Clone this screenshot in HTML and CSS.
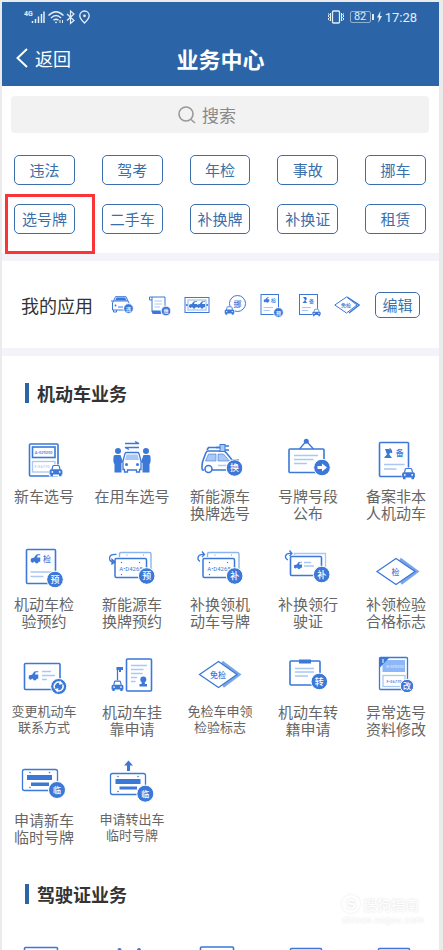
FILE: index.html
```html
<!DOCTYPE html>
<html lang="zh-CN">
<head>
<meta charset="utf-8">
<meta name="viewport" content="width=device-width, initial-scale=1">
<title>业务中心</title>
<link rel="stylesheet" href="styles.css">
</head>
<body>
<svg class="sprite" aria-hidden="true">
  <symbol id="car" viewBox="0 0 14 12">
    <path d="M1 11V5.500L3 4.500 4 1H10L11 4.500 13 5.500V11Z" fill="#fff" stroke="#fff" stroke-width="2"/>
    <path d="M3 5 3.800 1.700Q4 1 5 1H9Q10 1 10.200 1.700L11 5" fill="#fff" stroke="#3b78d8" stroke-width="1.200"/>
    <path d="M2.200 4.800H11.800Q13.400 5 13.400 6.500V10H12.500V11.700H10V10H4V11.700H1.500V10H.6V6.500Q.6 5 2.200 4.800Z" fill="#3b78d8"/>
    <circle cx="3.300" cy="7.400" r=".9" fill="#fff"/><circle cx="10.700" cy="7.400" r=".9" fill="#fff"/>
  </symbol>
  <symbol id="sidecar" viewBox="0 0 10 10">
    <path d="M0 5.500Q0 4 2 4L3.500 3.800 5.500 1Q6 .3 7 .3H10V1.300H7.300L6.300 3.600H10V7.800H8.300Q7.800 9.600 6.300 9.600T4.300 7.800H3.300Q3 8.800 2 8.800T.8 7.800H0Z" fill="#3b78d8"/>
  </symbol>
  <symbol id="plates" viewBox="0 0 80 54">
    <path d="M27.500 15V12Q27.500 10.500 29 10.500H57.500Q59 10.500 59 12V29" fill="none" stroke="#8db4ee" stroke-width="1.400"/>
    <rect x="23" y="16.500" width="31.500" height="19" rx="1.500" fill="#fff" stroke="#3b78d8" stroke-width="1.500"/>
    <g fill="#3b78d8"><circle cx="29.500" cy="20.500" r=".7"/><circle cx="47.500" cy="20.500" r=".7"/><circle cx="29.500" cy="32.500" r=".7"/><circle cx="35" cy="13" r=".5"/><circle cx="51.500" cy="13" r=".5"/></g>
  </symbol>
</svg>

<div class="phone">
  <header class="top">
    <div class="status">
      <svg width="68" height="18" viewBox="0 0 68 18" fill="none" stroke="#e5edf6" aria-hidden="true">
        <text x="0" y="8" class="net">4G</text>
        <path d="M8.500 13V15M11.500 11V15M14.500 8.500V15M17.500 6V15M20 3.500V15" stroke-width="1.500"/>
        <path d="M24.500 7.500Q32 0 39.500 7.500M27 10Q32 5 37 10M29.500 12.300Q32 10 34.500 12.300" stroke-width="1.400"/>
        <circle cx="32" cy="14.300" r=".9" fill="#e5edf6" stroke="none"/><path d="M36 12V15M38.500 12V15"/>
        <path d="M43 6 50 12.500 46.500 15.500V3L50 6 43 12.500" stroke-width="1.200"/>
        <path d="M60.500 15Q55.800 10.500 55.800 7.700A4.700 4.700 0 0 1 65.200 7.700Q65.200 10.500 60.500 15Z" stroke-width="1.300"/><circle cx="60.500" cy="7.800" r="1.400" fill="#e5edf6" stroke="none"/>
      </svg>
      <div class="status-right">
        <svg width="18" height="14" viewBox="0 0 18 14" fill="none" stroke="#e5edf6" aria-hidden="true"><rect x="5.500" y="1" width="7" height="12" rx="1" stroke-width="1.300"/><path d="M1 3.500 2.500 4.500 1 6 2.500 7.500 1 9 2.500 10.500M3.500 3V11M17 3.500 15.500 4.500 17 6 15.500 7.500 17 9 15.500 10.500M14.500 3V11"/></svg>
        <span class="battery">82</span>
        <svg width="5" height="12" viewBox="0 0 5 12" fill="#e5edf6" aria-hidden="true"><path d="M3.500 0 0 6.500H2L1.200 12 5 5H3Z"/></svg>
        <time>17:28</time>
      </div>
    </div>
    <div class="nav">
      <button class="back" type="button">
        <svg width="12" height="20" viewBox="0 0 12 20" fill="none" stroke="#fff" stroke-width="2" aria-hidden="true"><path d="M11 1 1.500 10 11 19"/></svg>
        返回
      </button>
      <h1>业务中心</h1>
    </div>
  </header>

  <main>
    <label class="search">
      <svg width="18" height="18" viewBox="0 0 18 18" fill="none" stroke="#999" stroke-width="1.600" aria-hidden="true"><circle cx="8" cy="8" r="7"/><path d="M13 13.500 17 17"/></svg>
      <input type="search" placeholder="搜索" aria-label="搜索">
    </label>

    <nav class="chips">
      <button type="button">违法</button><button type="button">驾考</button><button type="button">年检</button><button type="button">事故</button><button type="button">挪车</button>
      <button type="button" class="marked">选号牌</button><button type="button">二手车</button><button type="button">补换牌</button><button type="button">补换证</button><button type="button">租赁</button>
    </nav>

    <section class="mine">
      <h2>我的应用</h2>
      <div class="mine-icons">
        <svg viewBox="0 0 26 26"><path d="M4.500 9 6.500 4.700H17L19 9" class="s"/><path d="M6 8.500 7.500 5.500H16L17.800 8.500Z" class="f"/><path d="M4.500 9H19L20 11V18H3.500V11ZM4.500 18V20H7.500V18M2 9H4" class="s"/><circle cx="6.500" cy="13.500" r="1" class="f"/><path d="M9 15H14" class="s"/><circle cx="19.500" cy="16.500" r="4.900" class="b"/><text x="19.500" y="18.600" class="t xs w">违</text></svg>
        <svg viewBox="0 0 26 26"><path d="M5 8H2.500V5H18V20" class="s"/><path d="M5 5V20H16" class="s"/><path d="M5 18.500H14V22H6Q5 22 5 20Z" class="f"/><path d="M7.500 9H15M7.500 12H15M7.500 15H13" class="l"/><circle cx="19" cy="19" r="4.900" class="b"/><text x="19" y="21.100" class="t xs w">缴</text></svg>
        <svg viewBox="0 0 26 26"><rect x="1" y="5.500" width="24" height="15" class="s"/><rect x="4" y="8" width="18" height="10" class="s2"/><use href="#sidecar" x="5" y="9" width="8" height="8"/><use href="#sidecar" x="13" y="9" width="8" height="8"/><circle cx="2.800" cy="13" r="1" class="f"/><circle cx="23.200" cy="13" r="1" class="f"/></svg>
        <svg viewBox="0 0 26 26"><circle cx="15.500" cy="11.500" r="8" class="s"/><text x="15.500" y="14.500" class="t mid">挪</text><use href="#car" x="2" y="14" width="11" height="9"/></svg>
        <svg viewBox="0 0 26 26"><rect x="2" y="2.500" width="17.500" height="20" class="s"/><use href="#sidecar" x="4.500" y="5" width="6" height="6"/><text x="14.500" y="9.500" class="t xs">检</text><path d="M4.500 15.500H14M4.500 18.500H11" class="l"/><circle cx="19.500" cy="20.500" r="4.900" class="b"/><text x="19.500" y="22.600" class="t xs w">预</text></svg>
        <svg viewBox="0 0 26 26"><rect x="2.500" y="2.500" width="18" height="20" class="s"/><path d="M6 5H9L10 7 8.500 8.500 10 11H5.500L8 8Z" class="f"/><text x="14.500" y="10.500" class="t xs">备</text><path d="M5 15.500H14M5 18.500H11" class="l"/><use href="#car" x="15" y="16" width="9" height="9"/></svg>
        <svg viewBox="0 0 26 26"><path d="M13 5 25 13 15 21" class="s3"/><path d="M.8 13 12.500 5 23 13 12.500 21Z" class="s" fill="#fff"/><text x="12" y="15.200" class="t xs">免检</text></svg>
      </div>
      <button type="button" class="edit">编辑</button>
    </section>

    <section class="group">
      <h2>机动车业务</h2>
      <div class="services">
        <a href="#"><svg viewBox="0 0 80 54"><rect x="25.500" y="10" width="28.500" height="32" rx="1" class="s"/><rect x="28.500" y="13" width="22.500" height="10.500" class="s"/><text x="39.700" y="19.700" class="t micro">A•029250</text><rect x="28.500" y="27.500" width="22.500" height="10.500" class="s2"/><text x="38" y="34.200" class="t micro pale">F•26770</text><use href="#car" x="45" y="30" width="14" height="13"/></svg>新车选号</a>
        <a href="#"><svg viewBox="0 0 80 54"><path d="M33 9.500H47L43 7.500M47 13.500H33L37 15.500" class="s thin"/><circle cx="26" cy="17" r="3" class="f"/><circle cx="54" cy="17" r="3" class="f"/><path d="M23 21H28.500L31 28 29.500 29V38.500H22.500V30Q21 29 21.500 23Q21.500 21 23 21ZM57 21H51.500L49 28 50.500 29V38.500H57.500V30Q59 29 58.500 23Q58.500 21 57 21Z" class="f"/><path d="M31 27 33 19.500Q33.500 18.500 34.500 18.500H45.500Q46.500 18.500 47 19.500L49 27V35.500H47.500V38H44.500V36H35.500V38H32.500V35.500H31Z" class="s thin" fill="#fff"/><path d="M33 26 34.500 20.500H45.500L47 26Z" fill="#a9c8f5"/><circle cx="34.500" cy="30.500" r="1.500" class="f"/><circle cx="45.500" cy="30.500" r="1.500" class="f"/></svg>在用车选号</a>
        <a href="#"><svg viewBox="0 0 80 54"><path d="M27 16 28.500 13.500H39" class="s"/><path d="M24 36H22.500Q21.500 34 22.500 28L26 18.500Q26.500 17 28.500 17H43Q45 17 46.500 19L52 26H58V36H32" class="s"/><path d="M28.500 20H36V27H25.500ZM38 20H43.500L49.500 27H38Z" fill="#a9c8f5" stroke="#3b78d8" stroke-width=".6"/><path d="M32 22 34 26M38 31.500H47" class="s2"/><circle cx="28.500" cy="35" r="3.500" class="s" fill="#fff"/><path d="M36 13.500H40" class="s"/><rect x="40" y="10.500" width="5" height="7" fill="#a9c8f5" stroke="#3b78d8"/><path d="M45 12H49M45 16H49" class="s"/><circle cx="54.500" cy="34" r="8.300" class="b"/><text x="54.500" y="37.400" class="t w">换</text></svg>新能源车换牌选号</a>
        <a href="#"><svg viewBox="0 0 80 54"><path d="M31.500 15 38.300 7 45.500 15" class="s thin"/><circle cx="38.300" cy="7.300" r="2.500" class="f"/><rect x="21" y="15" width="35" height="23.500" rx="1" class="s"/><path d="M26 21.500H50M26 25.500H45.500M26 29.500H39" class="l"/><circle cx="54" cy="33.500" r="8.300" class="b"/><path d="M49.500 32H54V29.500L59 33.500 54 37.500V35H49.500Z" fill="#fff"/></svg>号牌号段公布</a>
        <a href="#"><svg viewBox="0 0 80 54"><rect x="23.500" y="8.500" width="29" height="34" rx="1" class="s"/><path d="M29 15H33L36 17.500 33 20 36 24H28.500V23L31 20.500Z" class="f"/><path d="M33.500 14.500Q36 16 35.500 19" class="s thin"/><text x="43.700" y="22" class="t mid">备</text><path d="M28 30.500H48.500M28 35H40.500" class="l"/><use href="#car" x="45.500" y="33" width="14" height="13"/></svg>备案非本人机动车</a>

        <a href="#"><svg viewBox="0 0 80 54"><rect x="22.500" y="7.500" width="29" height="34" rx="1" class="s"/><use href="#sidecar" x="26.500" y="12" width="10" height="10"/><text x="43" y="19.500" class="t mid">检</text><path d="M26.500 30H47M26.500 34.500H39.500" class="l"/><circle cx="51" cy="37.500" r="8.300" class="b"/><text x="51" y="40.900" class="t w">预</text></svg>机动车检验预约</a>
        <a href="#"><svg viewBox="0 0 80 54"><use href="#plates"/><text x="39" y="29" class="plate-no">A•D4265</text><path d="M24.500 12.500Q17.500 12 17.500 16Q17.500 20 21.500 20M20 17.500V22L23 20Z" class="s thin"/><circle cx="54.700" cy="34" r="8.300" class="b"/><text x="54.700" y="37.400" class="t w">预</text></svg>新能源车换牌预约</a>
        <a href="#"><svg viewBox="0 0 80 54"><use href="#plates"/><text x="39" y="29" class="plate-no">A•D4265</text><path d="M20 19.500Q17.500 18 18 15.500Q19 12 24 12.500M22 9.500 24.500 12.500 22 15" class="s thin"/><circle cx="54.700" cy="34" r="8.300" class="b"/><text x="54.700" y="37.400" class="t w">补</text></svg>补换领机动车号牌</a>
        <a href="#"><svg viewBox="0 0 80 54"><path d="M26.500 13V11.500H57.500V30" class="s2"/><rect x="22.500" y="14.500" width="31" height="19" rx="1" class="s" fill="#fff"/><path d="M20 18Q17 16.500 17.500 14Q18.500 11 23 11.500M21.500 8.500 24 11.500 21.500 14" class="s thin"/><use href="#sidecar" x="26" y="19.500" width="8" height="8"/><path d="M36 20.500H43M36 24H46" class="l"/><circle cx="53.700" cy="32.500" r="8.300" class="b"/><text x="53.700" y="35.900" class="t w">补</text></svg>补换领行驶证</a>
        <a href="#"><svg viewBox="0 0 80 54"><path d="M44 17 61 29.500 45 41.500" class="s3"/><path d="M21 29.500 40 16.500 59 29.500 40 42.500Z" class="s thin" fill="#fff"/><text x="39.500" y="32.700" class="t mid">检</text></svg>补领检验合格标志</a>

        <a href="#" class="small"><svg viewBox="0 0 80 54"><rect x="20.500" y="13.500" width="35.500" height="26" rx="1" class="s"/><use href="#sidecar" x="24.500" y="21" width="10" height="10"/><path d="M38 21.500H47M38 25.500H51M38 29.500H43" class="l"/><circle cx="54.700" cy="36.500" r="8" class="b"/><path d="M50.700 38.500A4.400 4.400 0 0 1 57 32.800M58.700 34.500A4.400 4.400 0 0 1 52.500 40.200" fill="none" stroke="#fff" stroke-width="1.400"/><path d="M56 30.500 59 34 55 34.700ZM53.500 42.500 50.500 39 54.500 38.300Z" fill="#fff"/></svg>变更机动车联系方式</a>
        <a href="#"><svg viewBox="0 0 80 54"><rect x="34.500" y="9" width="25" height="32" rx="1" class="s"/><path d="M39 15.500H55M39 19.500H51.500M39 23.500H50.500M39 27.500H45M39 31.500H43.500" class="l"/><circle cx="51.300" cy="29.500" r="3" class="f"/><path d="M50 31H52.500L53 34H55V36.500H47.500V34H49.500Z" class="f"/><path d="M25.500 31V18H31" class="s thin"/><path d="M24.500 17H31V20H29V22H27V20H24.500Z" class="f"/><use href="#car" x="19" y="30" width="13" height="11.500"/></svg>机动车挂靠申请</a>
        <a href="#" class="small"><svg viewBox="0 0 80 54"><path d="M42 12 59 24.500 43 36.500" class="s3"/><path d="M19.500 24.500 38.500 11.500 57 24.500 38.500 37.500Z" class="s thin" fill="#fff"/><text x="38" y="27.700" class="t mid">免检</text></svg>免检车申领检验标志</a>
        <a href="#"><svg viewBox="0 0 80 54"><rect x="22" y="11" width="30" height="24" rx="1" class="s"/><rect x="31" y="9.500" width="12" height="4" class="f"/><path d="M27 18.500H46M27 22H46M27 26H40" class="l"/><circle cx="51.300" cy="31.500" r="8.300" class="b"/><text x="51.300" y="34.900" class="t w">转</text></svg>机动车转籍申请</a>
        <a href="#"><svg viewBox="0 0 80 54"><rect x="23.500" y="7.500" width="28" height="32" rx="1" class="s thin"/><rect x="26.500" y="10" width="22.500" height="12" fill="#8db8f8"/><text x="39" y="17.700" class="t micro faint">B•029250</text><path d="M23.500 7.500H33.500L23.500 18Z" class="f"/><path d="M27 9V13" stroke="#fff"/><rect x="27" y="25.500" width="22" height="11" class="s2"/><text x="38" y="32.500" class="t micro">F•26770</text><circle cx="51" cy="36" r="6.700" class="b"/><text x="51" y="38.900" class="t mid w">改</text></svg>异常选号资料修改</a>

        <a href="#"><svg viewBox="0 0 80 54"><rect x="18.500" y="11.500" width="35" height="21" rx="2" class="s thin"/><path d="M23 17H48V22H23ZM27 24.500H45V28H27Z" class="f"/><g class="f"><circle cx="26" cy="14.500" r=".8"/><circle cx="45.500" cy="14.500" r=".8"/><circle cx="26" cy="29.500" r=".8"/></g><circle cx="53" cy="32" r="8.500" class="b"/><text x="53" y="35.200" class="t mid w">临</text></svg>申请新车临时号牌</a>
        <a href="#" class="small"><svg viewBox="0 0 80 54"><path d="M36.500 2.500 41 7.500H38V13H35V7.500H32Z" class="f"/><rect x="18.500" y="15.500" width="35" height="21" rx="2" class="s thin"/><path d="M23.500 21H48.500V26H23.500ZM27.500 28.500H45V31.500H27.500Z" class="f"/><g class="f"><circle cx="26" cy="18.500" r=".8"/><circle cx="46" cy="18.500" r=".8"/><circle cx="26" cy="33.500" r=".8"/></g><circle cx="53.300" cy="35.700" r="8.500" class="b"/><text x="53.300" y="38.900" class="t mid w">临</text></svg>申请转出车临时号牌</a>
      </div>
    </section>

    <section class="group">
      <h2>驾驶证业务</h2>
      <div class="services">
        <a href="#"><svg viewBox="0 0 80 54"><rect x="20.500" y="12.500" width="33" height="24" rx="1" class="s"/></svg></a>
        <a href="#"><svg viewBox="0 0 80 54"><circle cx="27.500" cy="15" r="2" class="f"/><circle cx="47" cy="15" r="2" class="f"/></svg></a>
        <a href="#"><svg viewBox="0 0 80 54"><rect x="20.500" y="12" width="33" height="24" rx="1" class="s"/></svg></a>
        <a href="#"><svg viewBox="0 0 80 54"><rect x="22.500" y="13.500" width="31" height="24" rx="1" class="s"/></svg></a>
        <a href="#"><svg viewBox="0 0 80 54"><rect x="22.500" y="13.500" width="31" height="24" rx="1" class="s"/></svg></a>
      </div>
    </section>
  </main>

  <div class="watermark">
    <span class="mark">S</span><span class="brand">搜狗指南</span>
    <span class="site">zhinan.sogou.com</span>
  </div>
</div>
</body>
</html>
```
FILE: styles.css
```css
* { box-sizing: border-box; }

body {
  margin: 0;
  height: 100vh;
  padding: 2px 4px 0 2px;
  background: #ebebeb;
  color: #333;
  font-family: "Noto Sans CJK SC", "Noto Sans", sans-serif;
}

button {
  padding: 0;
  border: 0;
  background: none;
  color: inherit;
  font: inherit;
}

h1, h2 { margin: 0; }

.sprite {
  position: absolute;
  width: 0;
  height: 0;
}

.phone {
  position: relative;
  display: flex;
  flex-direction: column;
  height: 100%;
  overflow: hidden;
  background: #fff;
}

/* Header */
.top {
  flex: none;
  background: #2b65a7;
  color: #fff;
}

.status {
  display: flex;
  align-items: center;
  justify-content: space-between;
  height: 30px;
  padding: 0 22px;
  color: #e5edf6;
  font-family: Roboto, sans-serif;
  font-size: 13px;
}

.status-right {
  display: flex;
  align-items: center;
  gap: 3px;
}

.battery {
  position: relative;
  width: 21px;
  height: 12px;
  margin: 0 3px 0 2px;
  border: 1px solid #8fb0d3;
  border-radius: 2px;
  font-size: 11px;
  line-height: 10px;
  text-align: center;
}

.battery::after {
  content: "";
  position: absolute;
  top: 2px;
  right: -4px;
  width: 2px;
  height: 6px;
  background: #e5edf6;
}

.net {
  fill: #e5edf6;
  stroke: none;
  font: bold 7px Roboto, sans-serif;
}

.nav {
  display: grid;
  grid-template-columns: 1fr auto 1fr;
  align-items: center;
  height: 54px;
  padding: 0 14px 2px;
}

.back {
  display: flex;
  align-items: center;
  gap: 7px;
  font-size: 18px;
  line-height: 26px;
}

h1 {
  font-size: 22px;
  line-height: 32px;
}

/* Body */
main {
  flex: 1;
  min-height: 0;
  overflow-y: auto;
  scrollbar-width: none;
}

.search {
  display: flex;
  align-items: center;
  justify-content: center;
  gap: 6px;
  height: 37px;
  margin: 10px 10px 0 9px;
  border-radius: 4px;
  background: #f2f2f2;
}

.search input {
  width: 60px;
  padding: 0;
  border: 0;
  outline: 0;
  background: none;
  font: inherit;
  font-size: 17px;
  line-height: 24px;
}

.search input::placeholder { color: #888; }

.chips {
  display: grid;
  grid-template-columns: repeat(5, 1fr);
  gap: 19px 27px;
  padding: 22px 13px 19px 12px;
  border-bottom: 8px solid #f3f3f9;
}

.chips button {
  position: relative;
  height: 30px;
}

.chips button, .edit {
  border: 1px solid #3a6fac;
  border-radius: 5px;
  color: #3a6fac;
  font-size: 15px;
  line-height: 22px;
  white-space: nowrap;
}

.marked::after {
  content: "";
  position: absolute;
  top: -11px;
  left: -10px;
  box-sizing: border-box;
  width: 90px;
  height: 60px;
  border: 3px solid #fb3537;
}

.mine {
  display: flex;
  align-items: center;
  height: 95px;
  padding: 0 19px;
  border-bottom: 8px solid #f3f3f9;
}

.mine h2 {
  font-size: 18px;
  font-weight: 400;
}

.mine-icons {
  display: flex;
  flex: 1;
  justify-content: space-between;
  margin: 0 15px 0 16px;
}

.mine-icons svg {
  width: 26px;
  height: 26px;
}

.edit {
  width: 45px;
  height: 26px;
}

.group h2 {
  display: flex;
  align-items: center;
  gap: 8px;
  padding: 27px 23px 31px;
  font-size: 18px;
  line-height: 18px;
}

.group h2::before {
  content: "";
  width: 4px;
  height: 20px;
  background: #2b65a7;
}

.group + .group h2 { padding-top: 39px; }

.services {
  display: grid;
  grid-template-columns: repeat(5, 1fr);
  gap: 21px 8px;
  padding: 0 3px 0 2px;
}

.services a {
  padding: 0 10px;
  color: #666;
  font-size: 15px;
  line-height: 17px;
  text-align: center;
  text-decoration: none;
}

.services a:nth-child(2) { padding: 0; }

.services svg {
  display: block;
  width: 80px;
  height: 54px;
  margin: 0 -10px -1px;
}

.services a:nth-child(2) svg { margin: 0 0 -1px; }

.services .small {
  padding: 0 5px;
  font-size: 13px;
  line-height: 16px;
}

.services .small svg { margin: 0 -5px -1px; }

/* Icon parts */
.s { fill: none; stroke: #3b78d8; stroke-width: 1.6; }
.s[fill] { fill: #fff; }
.thin { stroke-width: 1.3; }
.s2 { fill: none; stroke: #a9c8f5; stroke-width: 1.3; }
.s3 { fill: none; stroke: #7ba6e8; stroke-width: 3; }
.mine-icons .s { stroke-width: 1; }
.mine-icons .s3 { stroke: #3b78d8; stroke-width: 1.5; }
.l { fill: none; stroke: #a9c8f5; stroke-width: 1.5; }
.mine-icons .l { stroke-width: 1; }
.f { fill: #3b78d8; }
.b { fill: #3b78d8; stroke: #fff; stroke-width: 1; }
.t { fill: #3b78d8; font-size: 9px; font-weight: 500; text-anchor: middle; }
.mid { font-size: 8px; }
.xs { font-size: 5px; }
.micro { font-family: Roboto, sans-serif; font-size: 4px; }
.pale { fill: #a9c8f5; }
.faint { fill: #d5e5fc; }
.w { fill: #fff; }
.plate-no { fill: #3b78d8; font: 6px Roboto, sans-serif; text-anchor: middle; }

.watermark {
  position: absolute;
  right: 15px;
  bottom: 24px;
  display: grid;
  grid-template-columns: 18px auto;
  align-items: center;
  column-gap: 3px;
  color: #fff;
  text-shadow: 0 0 2px #e4e4e4, 0 0 3px #eee;
}

.mark {
  width: 18px;
  height: 18px;
  border: 1px solid #fff;
  border-radius: 50%;
  box-shadow: 0 0 3px #e4e4e4;
  font: bold 15px/16px "Liberation Sans", sans-serif;
  text-align: center;
}

.brand {
  font-size: 14px;
  line-height: 20px;
}

.site {
  grid-column: 1 / -1;
  font: 9px/12px "DejaVu Sans", sans-serif;
  text-align: center;
}
```
